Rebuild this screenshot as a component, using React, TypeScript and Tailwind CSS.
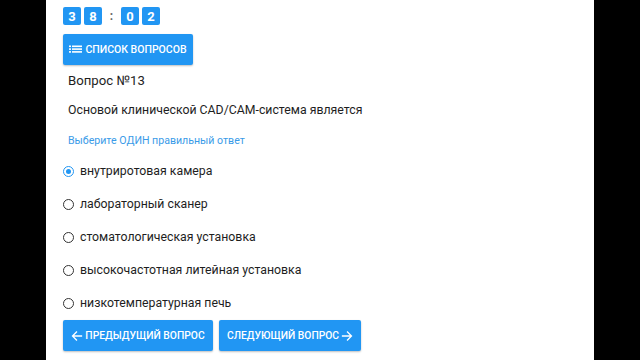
import React from "react";

const blue = "bg-[#2196f3]";

function Digit({ d }: { d: string }) {
  return (
    <div className="w-[18px] h-[18px] rounded-[2px] bg-[#2196f3] text-white text-[13px] font-bold flex items-center justify-center leading-none">
      {d}
    </div>
  );
}

function ListIcon() {
  return (
    <svg width="13" height="10" viewBox="0 0 13 10" fill="white">
      <rect x="0" y="0.5" width="2" height="1.6" />
      <rect x="3" y="0.5" width="10" height="1.6" />
      <rect x="0" y="3.3" width="2" height="1.6" />
      <rect x="3" y="3.3" width="10" height="1.6" />
      <rect x="0" y="6.1" width="2" height="1.6" />
      <rect x="3" y="6.1" width="10" height="1.6" />
    </svg>
  );
}

function ArrowLeft() {
  return (
    <svg width="12" height="12" viewBox="0 0 24 24" fill="none" stroke="white" strokeWidth="2.6" strokeLinecap="square">
      <path d="M21 12H4M11 4l-8 8 8 8" />
    </svg>
  );
}
function ArrowRight() {
  return (
    <svg width="12" height="12" viewBox="0 0 24 24" fill="none" stroke="white" strokeWidth="2.6" strokeLinecap="square">
      <path d="M3 12h17M13 4l8 8-8 8" />
    </svg>
  );
}

function Radio({ checked }: { checked?: boolean }) {
  if (checked) {
    return (
      <div className="w-[11px] h-[11px] rounded-full border-[1.5px] border-[#2196f3] flex items-center justify-center">
        <div className="w-[5px] h-[5px] rounded-full bg-[#2196f3]" />
      </div>
    );
  }
  return <div className="w-[11px] h-[11px] rounded-full border-[1.5px] border-[#333]" />;
}

const options = [
  "внутриротовая камера",
  "лабораторный сканер",
  "стоматологическая установка",
  "высокочастотная литейная установка",
  "низкотемпературная печь",
];

export default function App() {
  return (
    <div className="w-[640px] h-[360px] flex bg-black overflow-hidden" style={{ fontFamily: "Roboto, 'Noto Sans', sans-serif" }}>
      <div className="w-[46px] shrink-0 bg-black" />
      <div className="w-[548px] shrink-0 bg-white pl-[17px] pt-[7px] text-[#1e1e1e]">
        <div className="flex items-center">
          <Digit d="3" />
          <div className="w-[3px]" />
          <Digit d="8" />
          <div className="w-[19px] text-center text-[12px] font-bold text-[#666] leading-none">:</div>
          <Digit d="0" />
          <div className="w-[3px]" />
          <Digit d="2" />
        </div>
        <button className={`mt-[9px] h-[31px] w-[130px] ${blue} rounded-[2px] shadow-[0_1px_2px_rgba(0,0,0,0.25)] flex items-center justify-center gap-[3px] text-white text-[10.5px] font-medium uppercase`}>
          <ListIcon />
          <span>Список вопросов</span>
        </button>
        <div className="mt-[6px] pl-[5px] h-[20px] leading-[20px] text-[13.2px]">Вопрос №13</div>
        <div className="mt-[9px] pl-[5px] h-[20px] leading-[20px] text-[12.3px]">Основой клинической CAD/CAM-система является</div>
        <div className="mt-[13px] pl-[5px] h-[16px] leading-[16px] text-[10.6px] text-[#3a9be8]">Выберите ОДИН правильный ответ</div>
        <div className="mt-[6px] flex flex-col">
          {options.map((o, i) => (
            <div key={o} className="h-[33px] flex items-center gap-[6px]">
              <Radio checked={i === 0} />
              <span className="text-[12.3px] leading-none">{o}</span>
            </div>
          ))}
        </div>
        <div className="flex gap-[6px]">
          <button className={`h-[31px] w-[150px] ${blue} rounded-[2px] shadow-[0_1px_2px_rgba(0,0,0,0.25)] flex items-center justify-center gap-[2px] text-white text-[10.3px] font-medium uppercase`}>
            <ArrowLeft />
            <span>Предыдущий вопрос</span>
          </button>
          <button className={`h-[31px] w-[142px] ${blue} rounded-[2px] shadow-[0_1px_2px_rgba(0,0,0,0.25)] flex items-center justify-center gap-[2px] text-white text-[10.3px] font-medium uppercase`}>
            <span>Следующий вопрос</span>
            <ArrowRight />
          </button>
        </div>
      </div>
      <div className="w-[46px] shrink-0 bg-black" />
    </div>
  );
}
